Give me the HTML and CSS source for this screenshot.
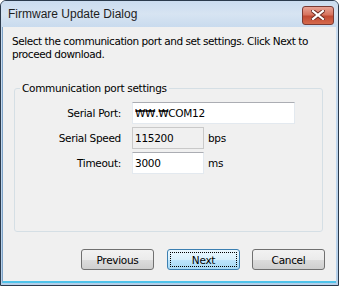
FILE: index.html
```html
<!DOCTYPE html>
<html lang="en">
<head>
  <meta charset="UTF-8" />
  <title>Firmware Update Dialog</title>
  <link rel="stylesheet" href="styles.css">
</head>
<body>

  <!-- VENTANA -->
  <div class="window">
    <div class="titlebar">
      <span class="title">Firmware Update Dialog</span>
      <button class="close-btn" aria-label="Close">
        <svg width="14" height="10" viewBox="0 0 14 10">
          <path d="M2 1 L12 9 M12 1 L2 9" stroke="#6b2a22" stroke-width="4" stroke-linecap="square" />
          <path d="M2 1 L12 9 M12 1 L2 9" stroke="#fff" stroke-width="2.2" stroke-linecap="square" />
        </svg>
      </button>
    </div>

    <div class="client">
      <p class="intro">Select the communication port and set settings. Click Next to proceed download.</p>

      <fieldset class="group">
        <legend>Communication port settings</legend>
        <div class="rows">
          <label class="lbl" for="port">Serial Port:</label>
          <input class="field wide" id="port" type="text" value="₩₩.₩COM12" />

          <label class="lbl" for="speed">Serial Speed</label>
          <input class="field short" id="speed" type="text" value="115200" disabled />
          <span class="unit">bps</span>

          <label class="lbl" for="timeout">Timeout:</label>
          <input class="field short" id="timeout" type="text" value="3000" />
          <span class="unit">ms</span>
        </div>
      </fieldset>

      <div class="buttons">
        <button class="btn">Previous</button>
        <button class="btn default"><span class="focus">Next</span></button>
        <button class="btn">Cancel</button>
      </div>
    </div>
  </div>

</body>
</html>
```

FILE: styles.css
```css
/* Reset */
* {
  margin: 0; padding: 0; box-sizing: border-box;
}
body, html {
  background: #fff;
  font-family: 'DejaVu Sans', Tahoma, sans-serif;
}
/* MARCO DE LA VENTANA */
.window {
  width: 339px;
  height: 286px;
  display: flex;
  flex-direction: column;
  border: 1px solid #2b3a4c;
  border-radius: 6px 6px 0 0;
  background: linear-gradient(#b9d1ea, #c9dcf0 30px, #b4cfe9);
  overflow: hidden;
}
.titlebar {
  height: 26px;
  display: flex;
  align-items: center;
  justify-content: space-between;
  padding: 0 4px 0 7px;
  background: linear-gradient(#cbdcef, #d7e4f2 50%, #c9dbee);
}
.title {
  font-family: 'Liberation Sans', Arial, sans-serif;
  font-size: 12px;
  color: #1e1e1e;
}
.close-btn {
  width: 32px;
  height: 19px;
  margin-top: 2px;
  display: flex;
  align-items: center;
  justify-content: center;
  border: 1px solid #7a3a33;
  border-radius: 3px;
  background: linear-gradient(#e8a395, #d7745f 45%, #c14a33 55%, #d56a4d);
}
/* AREA CLIENTE */
.client {
  flex: 1;
  margin: 0 2px 2px 1px;
  background: #f0f0f0;
  border-left: 1px solid #7fa3c7;
  border-bottom: 2px solid #4fc3ea;
  display: flex;
  flex-direction: column;
  padding: 8px 11px 0 9px;
  font-size: 10.5px;
  letter-spacing: -0.3px;
  color: #000;
}
.intro {
  line-height: 13px;
  letter-spacing: -0.45px;
}
/* GRUPO */
.group {
  margin: 21px 2px 0 2px;
  height: 150px;
  border: 1px solid #d5dfe5;
  border-radius: 3px;
  padding: 0;
}
.group legend {
  margin-left: 5px;
  padding: 0 2px;
  line-height: 13px;
}
.rows {
  display: grid;
  grid-template-columns: 106px 72px 1fr;
  column-gap: 11px;
  row-gap: 3px;
  margin-top: 7px;
  align-items: center;
}
.lbl {
  text-align: right;
}
.field {
  height: 22px;
  font-family: inherit;
  font-size: 10.5px;
  letter-spacing: -0.3px;
  color: #000;
  padding: 0 2px;
  background: #fff;
  border: 1px solid #e3e9ef;
  border-top-color: #abadb3;
  outline: none;
}
.field.wide {
  grid-column: span 2;
  width: 163px;
  font-family: 'DejaVu Sans', 'Noto Sans CJK KR', sans-serif;
}
.field.short {
  width: 72px;
}
.field:disabled {
  background: #f0f0f0;
  border-color: #c9c9c9;
  color: #000;
}
.unit {
  margin-left: -7px;
}
/* BOTONES */
.buttons {
  display: flex;
  justify-content: flex-end;
  gap: 12px;
  margin-top: 17px;
}
.btn {
  width: 73px;
  height: 21px;
  font-family: inherit;
  font-size: 10.5px;
  letter-spacing: -0.3px;
  color: #000;
  border: 1px solid #707070;
  border-radius: 3px;
  background: linear-gradient(#f2f2f2, #ebebeb 50%, #dddddd 50%, #cfcfcf);
}
.btn:first-child {
  margin-right: 1px;
}
.btn.default {
  border-color: #3c7fb1;
  background: linear-gradient(#eaf6fd, #d9f0fc 50%, #bee6fd 50%, #a7d9f5);
  padding: 2px;
}
.btn .focus {
  display: block;
  height: 100%;
  line-height: 15px;
  border: 1px dotted #000;
}
```
